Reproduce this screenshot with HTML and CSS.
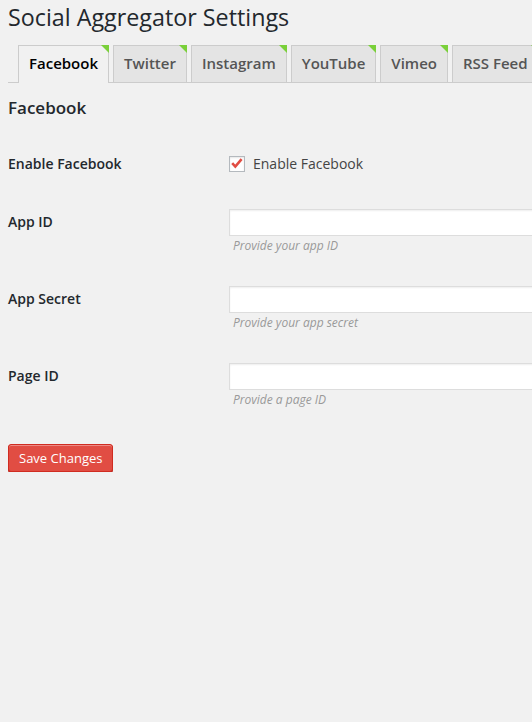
FILE: index.html
```html
<!DOCTYPE html>
<html>
<head>
<meta charset="utf-8">
<link rel="stylesheet" href="styles.css">
</head>
<body>
<div class="wrap">
  <h1 class="title">Social Aggregator Settings</h1>
  <nav class="tabs">
    <a class="tab active">Facebook</a>
    <a class="tab">Twitter</a>
    <a class="tab">Instagram</a>
    <a class="tab">YouTube</a>
    <a class="tab">Vimeo</a>
    <a class="tab">RSS Feed</a>
  </nav>
  <h2 class="section">Facebook</h2>
  <div class="row row-first">
    <div class="label label-check">Enable Facebook</div>
    <label class="check">
      <span class="box"><svg width="16" height="16" viewBox="0 0 16 16"><polyline points="3.2,7.2 6.3,10.6 12.6,3.2" fill="none" stroke="#e14d43" stroke-width="2.6" stroke-linecap="butt" stroke-linejoin="miter"/></svg></span>
      <span class="check-text">Enable Facebook</span>
    </label>
  </div>
  <div class="row row-field">
    <div class="label">App ID</div>
    <div class="field">
      <div class="input"></div>
      <p class="desc">Provide your app ID</p>
    </div>
  </div>
  <div class="row row-field">
    <div class="label">App Secret</div>
    <div class="field">
      <div class="input"></div>
      <p class="desc">Provide your app secret</p>
    </div>
  </div>
  <div class="row row-field">
    <div class="label">Page ID</div>
    <div class="field">
      <div class="input"></div>
      <p class="desc">Provide a page ID</p>
    </div>
  </div>
  <button class="btn">Save Changes</button>
</div>
</body>
</html>
```

FILE: styles.css
```css
html, body {
  margin: 0;
  padding: 0;
  background: #f1f1f1;
  overflow: hidden;
}
body {
  font-family: "Open Sans", "Noto Sans", sans-serif;
  color: #23282d;
  width: 532px;
  height: 722px;
}
.wrap {
  padding: 3px 0 0 8px;
  overflow: hidden;
}
.title {
  margin: 0;
  font-size: 23.3px;
  line-height: 29px;
  font-weight: 400;
  color: #23282d;
}
.tabs {
  display: flex;
  align-items: flex-end;
  margin-top: 13px;
  padding-left: 10px;
  border-bottom: 1px solid #ccc;
  white-space: nowrap;
}
.tab {
  position: relative;
  flex: none;
  display: block;
  margin-right: 4px;
  padding: 5px 10px 7px;
  border: 1px solid #ccc;
  border-bottom: none;
  background: #e4e4e4;
  color: #555;
  font-size: 15px;
  line-height: 24px;
  font-weight: 600;
}
.tab::after {
  content: "";
  position: absolute;
  top: -1px;
  right: -1px;
  width: 0;
  height: 0;
  border-top: 8px solid #7ad03a;
  border-left: 8px solid transparent;
}
.tab.active {
  background: #f1f1f1;
  color: #000;
  margin-bottom: -1px;
  padding-bottom: 8px;
}
.section {
  margin: 13px 0 0;
  font-size: 17px;
  line-height: 24px;
  font-weight: 600;
  color: #23282d;
}
.row {
  display: grid;
  grid-template-columns: 221px 1fr;
}
.row-first {
  margin-top: 34px;
}
.row-field {
  margin-top: 32px;
}
.row-field:nth-of-type(2) {
  margin-top: 35px;
}
.label {
  font-size: 14px;
  line-height: 20px;
  font-weight: 600;
  margin-top: 3px;
}
.label-check {
  margin-top: 0;
}
.check {
  display: flex;
  align-items: center;
  height: 20px;
  font-size: 14px;
  line-height: 20px;
  color: #444;
}
.box {
  box-sizing: border-box;
  width: 16px;
  height: 16px;
  border: 1px solid #b4b9be;
  background: #fff;
  box-shadow: inset 0 1px 2px rgba(0,0,0,0.1);
  display: flex;
  align-items: center;
  justify-content: center;
  margin-right: 8px;
}
.box svg {
  display: block;
  flex: none;
}
.field {
  min-width: 0;
}
.input {
  box-sizing: border-box;
  width: 350px;
  height: 27px;
  border: 1px solid #ddd;
  background: #fff;
  box-shadow: inset 0 1px 2px rgba(0,0,0,0.07);
}
.desc {
  margin: 2px 0 0 4px;
  font-size: 12px;
  line-height: 16px;
  font-style: italic;
  color: #999;
}
.btn {
  display: block;
  margin-top: 36px;
  box-sizing: border-box;
  height: 28px;
  padding: 0 10px 1px;
  border: 1px solid #d02c21;
  border-radius: 3px;
  background: #e14d43;
  box-shadow: inset 0 1px 0 #ec8a85, 0 1px 0 #ba281e;
  color: #fff;
  font-family: "Open Sans", "Noto Sans", sans-serif;
  font-size: 13px;
  line-height: 26px;
  font-weight: 400;
}
```
